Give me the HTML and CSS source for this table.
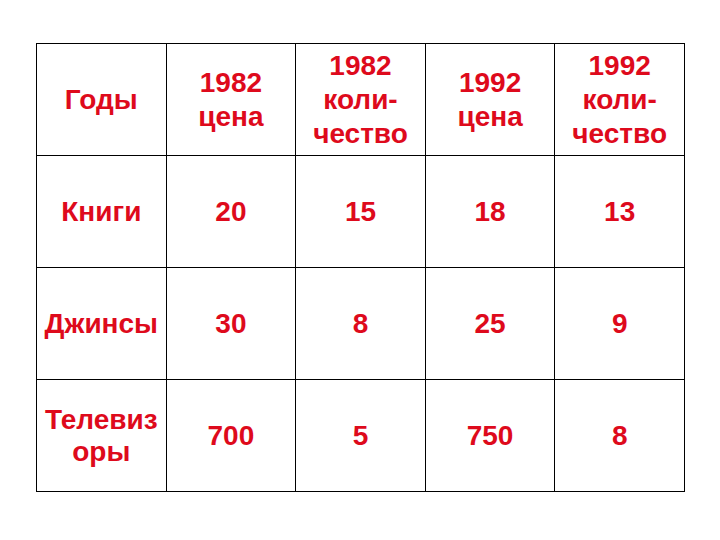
FILE: index.html
```html
<!DOCTYPE html>
<html lang="ru">
<head>
<meta charset="utf-8">
<link rel="stylesheet" href="styles.css">
</head>
<body>
<table class="grid">
  <tr>
    <td>Годы</td>
    <td>1982<br>цена</td>
    <td>1982<br>коли-<br>чество</td>
    <td>1992<br>цена</td>
    <td>1992<br>коли-<br>чество</td>
  </tr>
  <tr>
    <td>Книги</td>
    <td>20</td>
    <td>15</td>
    <td>18</td>
    <td>13</td>
  </tr>
  <tr>
    <td>Джинсы</td>
    <td>30</td>
    <td>8</td>
    <td>25</td>
    <td>9</td>
  </tr>
  <tr>
    <td>Телевиз<br>оры</td>
    <td>700</td>
    <td>5</td>
    <td>750</td>
    <td>8</td>
  </tr>
</table>
</body>
</html>
```
FILE: styles.css
```css
html, body {
  margin: 0;
  padding: 0;
  background: #ffffff;
}
body {
  padding: 43px 0 0 36px;
}
.grid {
  border-collapse: collapse;
  table-layout: fixed;
  width: 649px;
  font-family: "Liberation Sans", Arial, sans-serif;
  font-weight: bold;
  font-size: 28px;
  line-height: 34px;
  color: #de0a1c;
}
.grid td {
  border: 1px solid #000000;
  height: 111px;
  padding: 0;
  text-align: center;
  vertical-align: middle;
}
.grid tr:last-child td:first-child {
  line-height: 32px;
}
```
